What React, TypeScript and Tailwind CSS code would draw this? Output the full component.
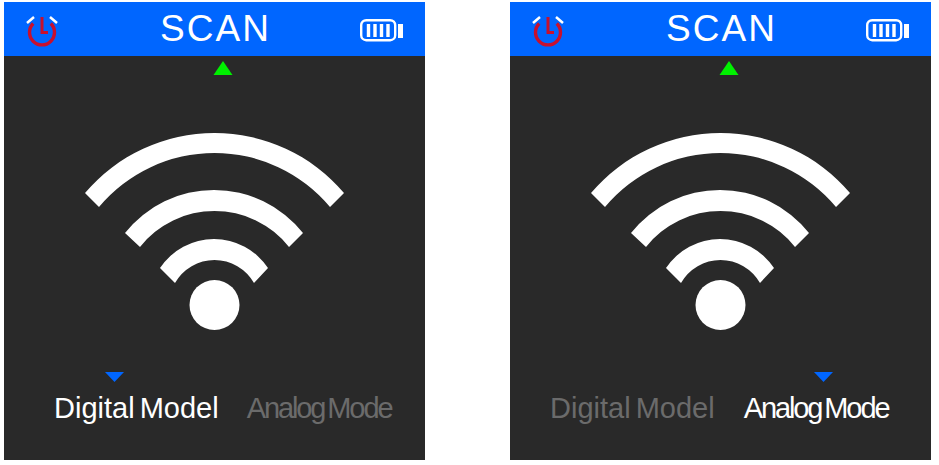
import React from 'react';

function PowerIcon() {
  return (
    <svg width="46" height="36" viewBox="0 0 46 36" fill="none">
      <path d="M2 12 L9 6 M25 6 L32 12" stroke="#ffffff" strokeWidth="2.500" />
      <path d="M8.200 12.500 A12.500 12.500 0 1 0 25.800 12.500" stroke="#c8102e" strokeWidth="3.400" />
      <path d="M17 6 V21.500 H23" stroke="#c8102e" strokeWidth="3" />
    </svg>
  );
}

function BatteryIcon() {
  return (
    <svg width="44" height="30" viewBox="0 0 44 30" fill="none">
      <rect x="1.200" y="6.200" width="34" height="20" rx="5" stroke="#ffffff" strokeWidth="2.400" />
      <path d="M8.500 10 V23 M15 10 V23 M21.500 10 V23 M28 10 V23" stroke="#ffffff" strokeWidth="3.400" />
      <rect x="38" y="10" width="5" height="14" fill="#ffffff" />
    </svg>
  );
}

function Wifi() {
  return (
    <svg width="260" height="198" viewBox="85 133 260 198" fill="#ffffff">
      <path d="M85 193 A169.800 169.800 0 0 1 344 193 L330 207 A150.500 150.500 0 0 0 99 207 Z" />
      <path d="M125 233 A113.600 113.600 0 0 1 303 233 L289 247 A95 95 0 0 0 140 247 Z" />
      <path d="M160 268 A64.800 64.800 0 0 1 268 268 L254 283 A45.400 45.400 0 0 0 175 283 Z" />
      <circle cx="214.500" cy="305" r="25" />
    </svg>
  );
}

function Panel({ mode }: { mode: 'digital' | 'analog' }) {
  const digital = mode === 'digital';
  return (
    <div className="w-[421px] h-[458px] flex flex-col bg-[#292929]">
      <div className="h-[54px] shrink-0 flex items-center justify-between pl-[21px] pr-[21px] bg-[#0066ff]">
        <PowerIcon />
        <span className="pb-[2px] text-[37px] leading-none tracking-[2px] text-white">SCAN</span>
        <BatteryIcon />
      </div>

      <div className="mt-[5px] ml-[209px]">
        <svg width="20" height="14" viewBox="0 0 20 14" className="block">
          <path d="M10 0 L19.500 14 H0.500 Z" fill="#00f000" />
        </svg>
      </div>

      <div className="mt-[58px] flex justify-center">
        <Wifi />
      </div>

      <div className={digital ? 'mt-[41px] ml-[101px]' : 'mt-[41px] ml-[304px]'}>
        <svg width="19" height="10" viewBox="0 0 19 10" className="block">
          <path d="M0 0 H19 L9.500 10 Z" fill="#0066ff" />
        </svg>
      </div>

      <div className={digital ? 'mt-[8px] pl-[50px] flex gap-[28px]' : 'mt-[8px] pl-[40px] flex gap-[29px]'}>
        <span className={digital ? 'text-[29px] leading-[36px] [word-spacing:-3px] text-white' : 'text-[29px] leading-[36px] [word-spacing:-3px] text-[#6b6b6b]'}>
          Digital Model
        </span>
        <span className={digital ? 'text-[29px] leading-[36px] tracking-[-2.1px] [word-spacing:-3px] text-[#6b6b6b]' : 'text-[29px] leading-[36px] tracking-[-2.1px] [word-spacing:-3px] text-white'}>
          Analog Mode
        </span>
      </div>
    </div>
  );
}

export default function App() {
  return (
    <div className="w-[939px] h-[465px] bg-white pt-[2px] pl-[4px] flex gap-[85px] font-['Liberation_Sans',Arial,sans-serif]">
      <Panel mode="digital" />
      <Panel mode="analog" />
    </div>
  );
}
